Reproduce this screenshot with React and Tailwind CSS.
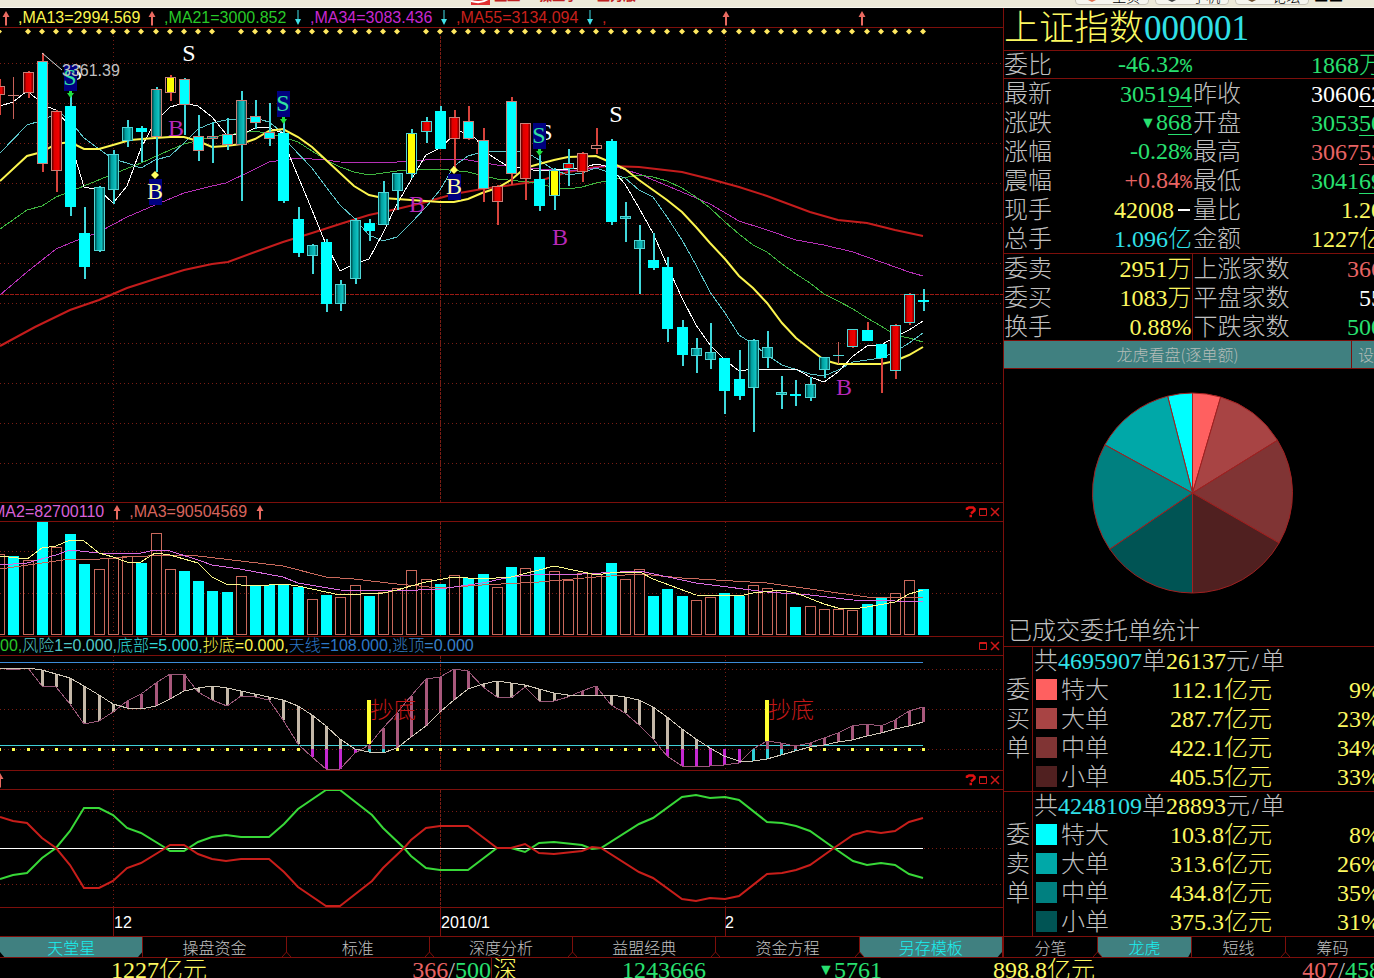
import { useState } from 'react';

const UP = '#e86a60';
const LINE = '#7c0f0b';
const GRID = '#7a1d14';
const CJK = "font-['Liberation_Serif','Noto_Sans_CJK_SC',serif]";

const xOf = k => Math.round(13.3 + 14.22 * k);

// [high, low, top, bottom, kind, edge, wick] starting one bar left of the screen
const candles = [
  [79,115,86,95,'r','p','p'],[77,119,95,96,'d','p','p'],[71,98,72,93,'r','p','p'],[53,172,61,164,'c','p','p'],
  [110,192,111,171,'r','p','p'],[92,216,106,207,'c'],[207,279,233,267,'c'],[186,252,187,251,'h'],[150,204,154,190,'h'],
  [120,147,127,141,'h'],[126,162,128,132,'c'],[87,172,89,137,'h','p'],[75,101,77,93,'y','p','p'],[78,135,79,105,'c','p'],
  [115,161,136,151,'c','p'],[122,163,136,139,'h','p'],[118,150,134,145,'c','p'],[91,201,100,145,'h','p'],[100,129,116,123,'c','p'],
  [103,146,132,139,'c','p'],[122,203,133,201,'c'],[207,257,219,253,'c'],[244,274,245,256,'h'],[239,312,242,304,'c'],
  [280,311,284,304,'h'],[218,284,220,279,'h'],[219,241,223,231,'c'],[181,225,192,225,'h'],[173,210,173,191,'h'],
  [129,178,133,174,'y'],[117,143,121,132,'r'],[106,149,111,149,'c'],[110,170,117,139,'r','p','p'],[106,140,121,139,'c','p','p'],
  [128,202,140,189,'c','p','p'],[185,225,186,202,'r','p','p'],[97,185,101,174,'c','p','p'],[123,200,123,179,'r','p','p'],
  [155,211,179,206,'c'],[168,210,170,196,'y'],[149,186,163,169,'r'],[152,182,153,172,'r','p','p'],[128,154,145,149,'e','p','p'],
  [139,225,141,222,'c'],[202,242,216,219,'h'],[225,294,240,249,'h'],[233,270,260,268,'c'],[257,342,267,329,'c'],
  [320,366,327,355,'c'],[338,373,348,356,'h'],[323,369,352,360,'h'],[358,414,358,391,'c'],[350,400,379,396,'c'],
  [339,432,340,388,'h'],[331,368,347,358,'h'],[376,409,392,395,'h'],[380,406,394,396,'c'],[377,401,384,398,'h'],
  [357,378,357,370,'h'],[342,364,355,356,'d','c','p'],[329,348,329,347,'r','c','p'],[322,341,330,341,'c','c','p'],
  [344,393,344,358,'c','c','p'],[324,379,325,371,'r','c','p'],[293,325,294,323,'r','c','p'],[289,311,300,302,'c','c','c'],
];

const maLines = [
  ['#c41c1c', 2, '0,346 35,327 70,310 99,300 127,288 155,279 184,270 212,264 228,262 255,252 283,242 312,233 340,224 369,215 397,209 426,202 454,194 482,189 511,185 539,181 568,172 596,167 610,166 639,167 682,172 710,179 739,187 767,196 810,212 838,220 867,223 895,230 923,236'],
  ['#b52fb5', 1, '0,295 27,272 56,249 75,241 99,232 127,217 155,205 184,193 212,186 226,183 255,169 269,162 298,158 326,160 340,162 383,163 411,161 440,159 468,160 497,165 525,168 554,170 582,170 610,165 639,174 682,192 710,204 739,221 767,230 796,240 824,245 853,252 881,262 909,272 923,276'],
  ['#3fb53f', 1, '0,229 27,210 42,206 56,197 84,186 113,174 141,163 170,150 184,144 212,137 241,133 255,131 283,137 298,142 326,160 340,167 354,172 369,175 383,173 397,171 440,169 468,172 497,179 539,183 554,188 568,189 582,187 596,183 639,175 653,177 667,181 682,188 696,197 710,208 725,222 739,234 753,245 767,252 782,264 796,274 810,283 824,294 838,301 853,309 867,318 881,326 895,335 909,338 923,342'],
  ['#5cc4c8', 1, '0,153 27,125 40,121 60,112 75,127 84,138 99,149 113,159 127,163 141,168 155,160 170,156 184,143 198,129 212,123 226,120 255,118 269,122 283,133 290,145 312,168 326,187 340,205 354,218 369,235 383,241 397,237 411,223 426,207 440,190 454,166 468,156 482,152 525,151 539,160 554,170 568,175 582,173 596,168 625,178 639,190 653,197 667,217 682,240 696,265 710,292 725,313 739,335 753,344 767,355 782,365 810,374 824,376 838,370 853,362 881,358 895,352 909,343 923,333'],
  ['#ffffff', 1, '0,106 13,102 27,91 37,99 48,107 56,110 66,122 75,157 84,187 99,190 113,203 127,186 141,148 155,122 170,107 184,103 198,106 212,117 226,134 241,135 257,127 269,128 283,133 290,157 312,210 325,242 340,271 354,264 369,259 383,233 397,204 411,180 426,155 440,148 454,135 460,131 475,138 490,155 507,166 539,171 554,170 582,168 596,164 610,167 625,184 639,208 653,233 667,265 682,298 696,325 710,345 725,360 739,371 753,369 796,369 810,377 824,382 838,372 853,356 867,346 881,345 895,337 909,330 923,321'],
  ['#fcf54e', 2, '0,181 27,156 42,152 56,144 70,142 84,149 99,149 113,145 130,140 155,138 170,137 184,137 198,141 212,147 226,146 241,144 255,139 269,131 283,129 298,137 312,147 326,160 340,173 354,186 369,195 383,198 411,200 440,202 454,202 468,199 482,193 497,188 511,180 525,168 539,164 554,160 568,157 596,156 610,162 625,169 639,180 653,190 667,200 682,212 696,227 710,243 725,259 739,276 753,288 767,303 782,323 796,338 810,349 824,360 838,364 881,364 895,361 909,355 923,347'],
];

// [top, filled]
const volumes = [
  [554,0],[556,1],[560,0],[521,1],[547,0],[534,1],[564,1],[569,0],[558,0],[556,0],[563,1],[533,0],[569,0],[571,1],[581,1],[591,1],[592,1],
  [576,0],[586,1],[585,1],[584,1],[587,1],[599,0],[595,1],[597,0],[585,0],[596,1],[592,0],[588,0],[570,0],[579,0],[584,1],[575,0],[578,1],
  [574,1],[587,0],[567,1],[568,0],[557,1],[571,0],[580,0],[573,0],[574,0],[563,1],[579,0],[569,0],[596,1],[589,1],[596,1],[600,0],[597,0],
  [593,1],[596,1],[585,0],[588,0],[590,0],[607,1],[606,0],[609,0],[609,0],[610,0],[604,1],[597,1],[593,0],[580,0],[589,1],
];

const volLines = [
  ['#c9695c', '0,569 70,559 100,559 127,557 170,555 198,556 283,566 326,577 354,579 397,584 440,588 482,585 539,582 596,577 640,574 682,578 767,583 824,591 867,597 895,598 923,597'],
  ['#d86be0', '0,565 27,563 56,555 70,550 99,553 141,553 155,550 170,551 198,560 212,565 240,569 283,577 298,583 340,590 397,591 440,589 482,583 511,577 539,574 582,574 640,571 696,583 767,592 810,595 853,600 895,601 923,601'],
  ['#fbf88a', '0,556 27,559 42,548 56,546 70,540 84,541 99,553 113,557 127,562 141,562 155,553 170,555 198,563 212,577 226,584 255,586 283,584 298,586 326,592 340,595 383,593 397,590 411,586 426,582 454,577 482,579 511,577 539,570 554,566 597,575 610,573 640,572 653,579 696,595 739,596 753,593 782,590 796,593 824,604 838,608 853,609 867,607 895,602 909,594 923,590'],
];

const slow = [668,669,668,670,674,678,686,695,704,708,709,706,699,691,688,686,688,691,694,697,700,706,715,726,739,749,752,753,748,737,726,712,700,689,684,681,683,685,689,693,695,695,695,695,697,700,707,717,729,739,748,756,761,761,759,755,751,747,745,742,740,736,733,729,726,722];
const fast = [668,670,668,686,687,704,724,721,712,701,694,683,674,674,692,700,706,696,697,700,720,744,757,769,769,753,745,728,713,696,679,677,669,671,687,697,698,687,701,701,697,691,686,705,713,725,739,756,766,767,766,765,763,749,741,743,746,743,738,733,726,724,726,720,711,707];

const trend = [[0,879],[13,875],[27,873],[42,858],[56,848],[70,831],[84,808],[99,808],[113,815],[127,828],[141,833],[164,847],[170,851],[184,851],[198,842],[212,837],[226,835],[241,837],[269,837],[284,824],[298,809],[326,790],[340,790],[372,815],[383,828],[404,848],[411,856],[426,868],[440,870],[468,870],[497,848],[511,848],[525,852],[539,843],[554,842],[582,845],[592,849],[601,848],[639,824],[653,818],[682,797],[696,795],[710,798],[725,797],[739,800],[767,822],[782,823],[796,826],[810,831],[834,848],[853,861],[867,865],[881,863],[895,865],[909,874],[923,878]];

const pts = (a) => a.map((y, i) => `${xOf(i - 1)},${y}`).join(' ');

function Grid({ rows, from, to }) {
  return (
    <g stroke={GRID} shapeRendering="crispEdges">
      {rows.map(y => <line key={y} x1="0" x2="100%" y1={y + 0.5} y2={y + 0.5} strokeDasharray="1 3"/>)}
      <line x1="113.5" x2="113.5" y1={from} y2={to} strokeDasharray="1 3"/>
      <line x1="440.5" x2="440.5" y1={from} y2={to} strokeDasharray="3 1"/>
      <line x1="725.5" x2="725.5" y1={from} y2={to} strokeDasharray="1 3"/>
    </g>
  );
}

function Candle({ k, d }) {
  const [hi, lo, top, bot, kind, edge = 'c', wick = 'c'] = d;
  const x = xOf(k);
  const edgeColor = edge === 'p' ? '#c88078' : '#4fd6d6';
  const wickColor = wick === 'p' ? '#d8433c' : '#3fd8dc';
  if (kind === 'd') {
    return <g><rect x={x} y={hi} width="1" height={lo - hi} fill="#c86058"/><rect x={x - 5} y={top} width="11" height="1" fill={edgeColor}/></g>;
  }
  const fill = { r:'url(#redBody)', c:'#00ffff', h:'url(#tealBody)', y:'#ffff00', e:'#000' }[kind];
  const plain = kind === 'c' && edge === 'c';
  return (
    <g>
      <rect x={x} y={hi} width="2" height={lo - hi} fill={wickColor}/>
      {plain
        ? <rect x={x - 5} y={top} width="11" height={Math.max(bot - top, 2)} fill="#00ffff"/>
        : <rect x={x - 4.5} y={top + 0.5} width="10" height={Math.max(bot - top - 1, 2)} fill={fill} stroke={edgeColor}/>}
      {kind === 'y' && <rect x={x - 4} y={top + 1} width="1" height={bot - top - 2} fill="#000"/>}
      {kind === 'y' && <rect x={x + 4} y={top + 1} width="1" height={bot - top - 2} fill="#000"/>}
    </g>
  );
}

function Mark({ x, y, t, color, box }) {
  return (
    <g>
      {box && <rect x={x - 6} y={y - 20} width="13" height="26" fill="#000080"/>}
      <text x={x} y={y} fill={color} fontSize="24" textAnchor="middle" className={CJK}>{t}</text>
    </g>
  );
}

function MainChart() {
  return (
    <svg className="block w-full h-[474px]" role="img" aria-label="K线图">
      <defs>
        <linearGradient id="redBody"><stop offset="0" stopColor="#400"/><stop offset="0.3" stopColor="#e00000"/><stop offset="0.7" stopColor="#f00000"/><stop offset="1" stopColor="#500"/></linearGradient>
        <linearGradient id="tealBody"><stop offset="0" stopColor="#033"/><stop offset="0.3" stopColor="#00a0a0"/><stop offset="0.7" stopColor="#10c0c0"/><stop offset="1" stopColor="#033"/></linearGradient>
      </defs>
      <g transform="translate(0 -28)">
        <Grid rows={[63,103,143,183,223,263,303,343,383,423,463]} from={36} to={502}/>
        <line x1="0" x2="100%" y1="294.5" y2="294.5" stroke="#9c1a14" strokeDasharray="4 1" shapeRendering="crispEdges"/>
        {maLines.map(([c, w, p]) => <polyline key={c} points={p} fill="none" stroke={c} strokeWidth={w} shapeRendering={w === 1 ? 'crispEdges' : 'auto'}/>)}
        <g shapeRendering="crispEdges">
          {candles.map((d, i) => <Candle key={i} k={i - 1} d={d}/>)}
        </g>
        {candles.map((_, i) => ![1, 16, 29].includes(i) && (
          <path key={i} d={`M${xOf(i - 1)} 28.500l3 3-3 3-3-3z`} fill="#ffe860"/>
        ))}
        <path d="M42 53L62 70" stroke="#ddd" fill="none"/>
        <Mark x={76} y={80} t="S" color="#fff"/>
        <Mark x={70} y={85} t="S" color="#30e0a0" box/>
        <text x="62" y="76" fill="#c0c0c0" fontSize="16" className="font-['Liberation_Sans',sans-serif]">3361.39</text>
        <Mark x={189} y={61} t="S" color="#fff"/>
        <Mark x={283} y={111} t="S" color="#30e0a0" box/>
        <Mark x={546} y={140} t="S" color="#fff"/>
        <Mark x={539} y={143} t="S" color="#30e0a0" box/>
        <Mark x={616} y={122} t="S" color="#fff"/>
        <Mark x={155} y={199} t="B" color="#ffffa0" box/>
        <Mark x={454} y={194} t="B" color="#ffffa0" box/>
        <Mark x={176} y={136} t="B" color="#b828b8"/>
        <Mark x={417} y={212} t="B" color="#b828b8"/>
        <Mark x={560} y={245} t="B" color="#b828b8"/>
        <Mark x={844} y={395} t="B" color="#b828b8"/>
        {[[70,91],[283,117],[539,149]].map(([x, y]) => <path key={x} d={`M${x - 1} ${y}h3v2h2l-3.500 5l-3.500-5h2z`} fill="#20e040"/>)}
        {[[155,175],[454,170]].map(([x, y]) => <path key={x} d={`M${x} ${y - 4}l4 4-4 4-4-4z`} fill="#ffff60"/>)}
      </g>
    </svg>
  );
}

function VolumeChart() {
  return (
    <svg className="block w-full h-[114px]" role="img" aria-label="成交量">
      <g transform="translate(0 -522)" shapeRendering="crispEdges">
        <Grid rows={[551,593]} from={522} to={636}/>
        {volumes.map(([top, solid], i) => solid
          ? <rect key={i} x={xOf(i - 1) - 5} y={top} width="11" height={635 - top} fill="#00ffff"/>
          : <rect key={i} x={xOf(i - 1) - 4.5} y={top + 0.5} width="10" height={634 - top} fill="none" stroke="#c9695c"/>)}
        {volLines.map(([c, p]) => <polyline key={c} points={p} fill="none" stroke={c}/>)}
      </g>
    </svg>
  );
}

function BottomFinder() {
  return (
    <svg className="block w-full h-[114px]" role="img" aria-label="抄底指标">
      <g transform="translate(0 -656)" shapeRendering="crispEdges">
        <Grid rows={[669,709,749]} from={656} to={770}/>
        <path d="M0 662.500H923" stroke="#3c8cd8"/>
        <path d="M0 745.500H923" stroke="#40d0d8"/>
        {slow.map((s, i) => {
          const f = fast[i], x = xOf(i - 1) - 1;
          const a = Math.min(s, f), b = Math.max(s, f);
          const under = b > 750;
          const rising = f < s;
          return (
            <g key={i}>
              {a < 749 && <rect x={x} y={a} width="3" height={Math.min(b, 749) - a} fill={rising ? '#a8587c' : '#c4b8a8'}/>}
              {under && <rect x={x} y={rising ? Math.max(a, 749) : 749} width="3" height={b - (rising ? Math.max(a, 749) : 749)} fill={rising ? '#30d0d8' : '#c428d0'}/>}
              {!under && <rect x={x} y="748" width="3" height="3" fill="#ffff50"/>}
            </g>
          );
        })}
        <polyline points={pts(fast)} fill="none" stroke="#985878"/>
        <polyline points={pts(slow)} fill="none" stroke="#d0c8b8"/>
        <rect x="367" y="700" width="4" height="44" fill="#ffff30"/>
        <rect x="765" y="700" width="4" height="41" fill="#ffff30"/>
        <g fill="#c01818" fontSize="23" className={CJK}>
          <text x="370" y="718">抄底</text>
          <text x="768" y="718">抄底</text>
        </g>
      </g>
    </svg>
  );
}

function TrendChart() {
  return (
    <svg className="block w-full h-[117px]" role="img" aria-label="趋势线">
      <g transform="translate(0 -790)">
        <Grid rows={[811,848,884]} from={790} to={907}/>
        <path d="M0 848.500H923" stroke="#fff" shapeRendering="crispEdges"/>
        <polyline points={trend.map(p => p.join()).join(' ')} fill="none" stroke="#38d838" strokeWidth="2"/>
        <polyline points={trend.map(([x, y]) => `${x},${1696 - y}`).join(' ')} fill="none" stroke="#c81e1a" strokeWidth="2"/>
      </g>
    </svg>
  );
}

function Arrow({ down, className = '' }) {
  return (
    <svg width="8" height="16" viewBox="0 0 8 16" className={`shrink-0 ${className}`} aria-hidden="true">
      {down
        ? <path d="M3.500 0h1v9h2.500l-3 6-3-6h2.500z" fill="#40e0e8"/>
        : <path d="M3 15.500h2V7h2.500l-3.500-6-3.500 6H3z" fill={UP}/>}
    </svg>
  );
}

function PanelTools({ help }) {
  return (
    <div className="ml-auto flex shrink-0 items-center pr-0.5">
      {help && (
        <button aria-label="帮助" className="w-3">
          <svg width="12" height="12" viewBox="0 0 12 12"><path d="M2 4V2.500L4 1.500h4L9.500 3v1.500L6 7.500M4.500 10h2.500" fill="none" stroke="#e01010" strokeWidth="2.500"/></svg>
        </button>
      )}
      <button aria-label="最大化" className="w-3">
        <svg width="12" height="12" viewBox="0 0 12 12"><path d="M2.500 2.500h7v7h-7zM2 3.500h8" fill="none" stroke="#d01818"/></svg>
      </button>
      <button aria-label="关闭" className="w-3">
        <svg width="12" height="12" viewBox="0 0 12 12"><path d="M2 2l8 8M10 2l-8 8" stroke="#d01818" strokeWidth="1.500"/></svg>
      </button>
    </div>
  );
}

const headCls = "flex items-center leading-[18px] text-base whitespace-nowrap overflow-hidden border-b border-[#7c0f0b] font-['Liberation_Sans','Noto_Sans_CJK_SC',sans-serif]";

const mas = [
  [',MA13=2994.569', 'text-[#fcf54e]', false],
  [',MA21=3000.852', 'text-[#28c828]', true],
  [',MA34=3083.436', 'text-[#c828d0]', true],
  [',MA55=3134.094', 'text-[#c8201c]', true],
];

const notch = 'M0 5L4.500 0L9 5';

function Tabs({ items, active, onPick, tabCls }) {
  return (
    <div role="tablist" className="flex h-[21px] border-b border-[#7c0f0b]">
      {items.map((t, i) => {
        const on = active.includes(t);
        return (
          <button key={t} role="tab" aria-selected={on} onClick={() => onPick(t)}
            className={`relative h-5 text-base leading-5 font-['Noto_Sans_CJK_SC',sans-serif] font-light border-r border-[#7c0f0b] ${tabCls}`}>
            <span className={on
              ? 'block h-5 bg-[#408080] text-[#18f0f0] [clip-path:polygon(0_0,100%_0,100%_75%,97%_100%,3%_100%,0_75%)]'
              : 'block h-5 text-[#c0c0c0]'}>{t}</span>
            {i < items.length - 1 && !on && (
              <svg className="absolute -right-[5px] bottom-0 z-10" width="9" height="5"><path d={notch} fill="#000" stroke={LINE}/></svg>
            )}
          </button>
        );
      })}
    </div>
  );
}

const G = 'text-[#28e070]', Y = 'text-[#fcf860]', R = 'text-[#e86464]', C = 'text-[#30e0e8]', W = 'text-white';

const U = ({ a, b }) => <>{a}<span className="underline decoration-1 underline-offset-4">{b}</span></>;
const Pct = () => <span className="text-xl leading-none font-['Liberation_Mono',monospace]">%</span>;
const Fall = () => <span className="inline-block w-4 text-center text-base leading-4 align-middle mb-1 font-['DejaVu_Sans',sans-serif]">▼</span>;

const quotes = [
  ['最新', G, <U a="3051" b="94"/>, '昨收', W, <U a="3060" b="62"/>],
  ['涨跌', G, <><Fall/><U a="8" b="68"/></>, '开盘', G, <U a="3053" b="50"/>],
  ['涨幅', G, <>-0.28<Pct/></>, '最高', R, <U a="3067" b="53"/>],
  ['震幅', R, <>+0.84<Pct/></>, '最低', G, <U a="3041" b="69"/>],
  ['现手', Y, <>42008<span className="inline-block w-3 h-0.5 ml-1 mr-0.5 align-middle mb-1 bg-white"/></>, '量比', Y, '1.20'],
  ['总手', C, '1.096亿', '金额', Y, '1227亿'],
];
const breadth = [
  ['委卖', Y, '2951万', '上涨家数', R, '366'],
  ['委买', Y, '1083万', '平盘家数', W, '55'],
  ['换手', Y, '0.88%', '下跌家数', G, '500'],
];

function QuoteTable({ rows, rowCls, split }) {
  return (
    <table className="table-fixed w-[379px] leading-6">
      <colgroup><col className="w-[50px]"/><col className="w-[138px]"/><col className="w-[110px]"/><col/></colgroup>
      <tbody>
        {rows.map(([l1, c1, v1, l2, c2, v2]) => (
          <tr key={l1} className={rowCls}>
            <th scope="row" className="text-left font-light whitespace-nowrap">{l1}</th>
            <td className={`text-right whitespace-nowrap ${c1} ${split ? 'border-r border-[#7c0f0b]' : ''}`}>{v1}</td>
            <th scope="row" className="text-left font-light whitespace-nowrap pl-px">{l2}</th>
            <td className={`text-right whitespace-nowrap ${c2}`}>{v2}</td>
          </tr>
        ))}
      </tbody>
    </table>
  );
}

const buy = [['特大','112.1','9%','#ff6060'],['大单','287.7','23%','#a84444'],['中单','422.1','34%','#803434'],['小单','405.5','33%','#502020']];
const sell = [['特大','103.8','8%','#00ffff'],['大单','313.6','26%','#00a8a8'],['中单','434.8','35%','#008080'],['小单','375.3','31%','#005454']];

function OrderTable({ side, total, avg, rows }) {
  return (
    <table className="table-fixed w-[380px] border-t border-[#7c0f0b] border-separate border-spacing-0 leading-6">
      <colgroup><col className="w-[29px]"/><col className="w-[28px]"/><col className="w-[60px]"/><col className="w-[151px]"/><col/></colgroup>
      <tbody>
        <tr className="h-7">
          <th rowSpan={5} scope="rowgroup" className="border-r border-[#7c0f0b] font-light align-middle leading-[29px] px-0.5">{side}</th>
          <td colSpan={4} className="pl-px whitespace-nowrap">共<span className={C}>{total}</span>单<span className={Y}>{avg}</span>元<span className="mx-0.5">/</span>单</td>
        </tr>
        {rows.map(([name, v, p, c]) => (
          <tr key={name} className="h-[29px]">
            <td className="pl-[3px]"><span className="block w-[21px] h-[21px]" style={{ background: c }}/></td>
            <th scope="row" className="text-left font-light">{name}</th>
            <td className={`text-right ${Y}`}>{v}亿元</td>
            <td className={`text-right pr-[3px] ${Y}`}>{p}</td>
          </tr>
        ))}
      </tbody>
    </table>
  );
}

function Pie() {
  const cx = 188.5, cy = 124, r = 100;
  const slices = [];
  [[buy, 1], [sell, -1]].forEach(([rows, dir]) => {
    const sum = rows.reduce((s, x) => s + parseInt(x[2]), 0);
    let a = 0;
    rows.forEach(([, , p, c]) => {
      const b = a + parseInt(p) / sum * Math.PI;
      slices.push([`M${cx} ${cy}L${cx + dir * r * Math.sin(a)} ${cy - r * Math.cos(a)}A${r} ${r} 0 0 ${dir > 0 ? 1 : 0} ${cx + dir * r * Math.sin(b)} ${cy - r * Math.cos(b)}z`, c]);
      a = b;
    });
  });
  return (
    <svg className="block w-full h-[248px]" role="img" aria-label="委托单占比">
      {slices.map(([d, c]) => <path key={c} d={d} fill={c} stroke="#a02020" strokeWidth="1"/>)}
    </svg>
  );
}

const tools = [['主页', '#e07050'], ['手机', '#444444'], ['论坛', '#705030']];

export default function App() {
  const [left, setLeft] = useState('天堂星');
  const [right, setRight] = useState('龙虎');

  return (
    <div className={`min-h-screen w-full overflow-hidden bg-black flex flex-col text-2xl font-light text-[#c0c0c0] ${CJK}`}>
      <header className="h-2 shrink-0 overflow-hidden flex items-end bg-[#ece9d8] border-b border-[#f8f8f0] font-['Noto_Sans_CJK_SC',sans-serif]">
        <div className="flex-1 flex items-end justify-center pl-8">
          <svg width="19" height="8" viewBox="0 0 19 8" aria-hidden="true"><path d="M0 0h19v6H0z" fill="#e03030"/><path d="M0 2q10 3 17-2" stroke="#fff" strokeWidth="2" fill="none"/></svg>
          <h1 className="h-4 mb-1 ml-1 text-[13px] leading-4 font-bold text-[#c02020]">益盟 · 操盘手 · 主力版</h1>
        </div>
        <div className="flex shrink-0 items-end gap-1.5 pr-8">
          {tools.map(([t, c]) => (
            <button key={t} className="w-[74px] h-5 mb-0.5 flex items-end justify-center gap-3 rounded-b border border-[#c8c4b8] bg-[#f6f5ee] text-sm leading-4 text-black">
              <svg width="16" height="16" className="mb-0.5" aria-hidden="true"><path d="M2 4h12v9l-6 3-6-3z" fill={c}/></svg>{t}
            </button>
          ))}
          <span className="h-3 text-xs leading-3 text-black">━ ━</span>
        </div>
      </header>

      <main className="flex">
        <section className="flex-1 min-w-0">
          <div className={`h-5 ${headCls}`}>
            <div className="w-[18px] shrink-0"><Arrow className="ml-0.5"/></div>
            {mas.map(([t, c, down]) => (
              <div key={t} className="flex items-center w-[146px] shrink-0">
                <span className={c}>{t}</span><Arrow down={down} className="ml-2"/>
              </div>
            ))}
            <span className="text-[#c8201c] w-[120px] shrink-0">,</span>
            <Arrow/>
            <Arrow className="ml-32"/>
          </div>
          <div className="border-b border-[#7c0f0b]"><MainChart/></div>

          <div className={`h-[19px] ${headCls}`}>
            <span className="-ml-2 text-[#d860d8]">MA2=82700110</span><Arrow className="ml-[9px]"/>
            <span className="ml-2 text-[#d8645c]">,MA3=90504569</span><Arrow className="ml-[9px]"/>
            <PanelTools help/>
          </div>
          <div className="border-b border-[#7c0f0b]"><VolumeChart/></div>

          <div className={`h-[19px] ${headCls}`}>
            <span className="text-[#28c828]">00,</span>
            <span className="text-[#50c8c8]">风险1=0.000,</span>
            <span className="text-[#30d8d8]">底部=5.000,</span>
            <span className="text-[#fcf54e]">抄底=0.000,</span>
            <span className="text-[#2c78c8]">天线=108.000,</span>
            <span className="text-[#3880c8]">逃顶=0.000</span>
            <PanelTools/>
          </div>
          <div className="border-b border-[#7c0f0b]"><BottomFinder/></div>

          <div className={`h-[19px] ${headCls}`}>
            <Arrow className="-ml-1"/>
            <PanelTools help/>
          </div>
          <div className="border-b border-[#7c0f0b]"><TrendChart/></div>

          <svg className="block w-full h-7" role="img" aria-label="日期轴">
            <path d="M113.500 0V28M440.500 0V28M725.500 0V28" stroke={LINE}/>
            <g fill="#fff" fontSize="16" className="font-['Liberation_Sans',sans-serif]">
              <text x="114" y="20">12</text><text x="441" y="20">2010/1</text><text x="725" y="20">2</text>
            </g>
          </svg>
          <div className="border-t border-[#7c0f0b]">
            <Tabs items={['天堂星','操盘资金','标准','深度分析','益盟经典','资金方程','另存模板']} active={[left, '另存模板']} onPick={setLeft} tabCls="flex-1"/>
          </div>
        </section>

        <aside className="w-[371px] shrink-0 overflow-hidden border-l border-[#7c0f0b]">
          <h2 className="h-[43px] w-[380px] text-[35px] leading-[42px] whitespace-nowrap border-b border-[#7c0f0b] font-light">
            <span className={Y}>上证指数</span><span className={C}>000001</span>
          </h2>
          <div className="border-b border-[#7c0f0b]">
            <QuoteTable rowCls="h-[27px]" rows={[['委比', G, <>-46.32<Pct/></>, '', G, '1868万']]}/>
          </div>
          <QuoteTable rowCls="h-[29px]" rows={quotes}/>
          <div className="h-[87px] overflow-hidden border-t border-[#7c0f0b]"><QuoteTable rowCls="h-[29px]" rows={breadth} split/></div>
          <div className="flex w-[380px] h-[29px] border-y border-[#7c0f0b] bg-[#408080] text-base leading-[27px] text-[#b4bcb8] font-['Noto_Sans_CJK_SC',sans-serif] font-light">
            <button className="w-[348px] shrink-0 border-r border-[#7c0f0b]">龙虎看盘(逐单额)</button>
            <button className="pl-1.5 shrink-0 whitespace-nowrap">设置</button>
          </div>
          <Pie/>
          <h3 className="h-[29px] pl-1 leading-[29px] font-light">已成交委托单统计</h3>
          <OrderTable side="委买单" total="4695907" avg="26137" rows={buy}/>
          <OrderTable side="委卖单" total="4248109" avg="28893" rows={sell}/>
          <div className="w-[380px] border-t border-[#7c0f0b]">
            <Tabs items={['分笔','龙虎','短线','筹码']} active={[right]} onPick={setRight} tabCls="w-[94px]"/>
          </div>
        </aside>
      </main>

      <footer className="flex h-5 overflow-hidden leading-6 whitespace-nowrap">
        <span className={`w-[207px] shrink-0 text-right ${Y}`}>1227亿元</span>
        <span className="w-[285px] shrink-0 text-right border-r border-[#7c0f0b]"><span className={R}>366</span>/<span className={G}>500</span></span>
        <span className={`${Y} shrink-0 pl-px w-32`}>深</span>
        <span className={`${G} shrink-0 w-[86px] text-right`}>1243666</span>
        <span className={`${G} shrink-0 w-44 text-right`}><Fall/>5761</span>
        <span className={`${Y} shrink-0 w-[213px] text-right`}>898.8亿元</span>
        <span className="w-[286px] shrink-0 text-right"><span className={R}>407</span>/<span className={G}>458</span></span>
      </footer>
    </div>
  );
}
